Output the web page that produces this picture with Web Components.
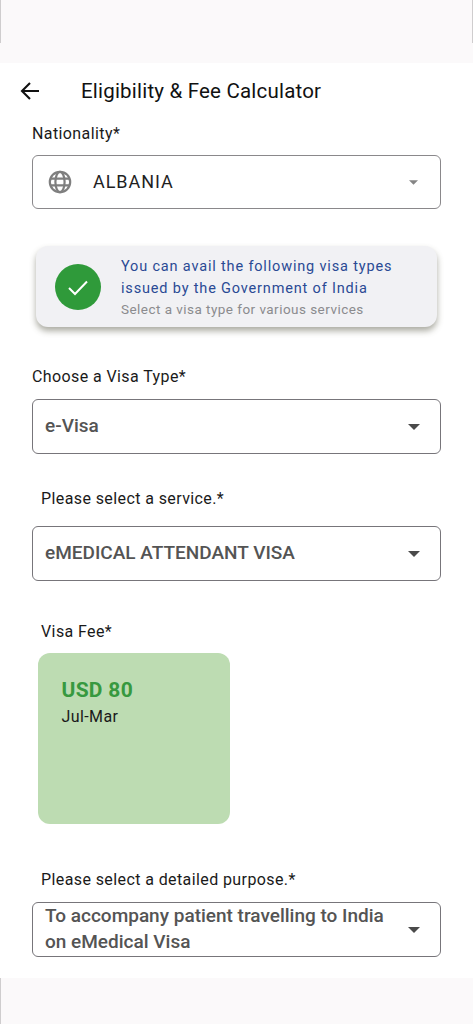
<!DOCTYPE html>
<html><head><meta charset="utf-8"><title>Eligibility & Fee Calculator</title>
<style>
html,body{margin:0;padding:0;background:#fff}
body{width:473px;height:1024px;overflow:hidden;font-family:Roboto,"Liberation Sans",sans-serif;display:flex;flex-direction:column}
</style></head><body>
<sys-bar kind="top"></sys-bar>
<app-header>Eligibility &amp; Fee Calculator</app-header>
<main-form>
  <field-label style="margin-top:0;height:22px">Nationality*</field-label>
  <select-box variant="plain" style="margin-top:10px;height:54px" icon>ALBANIA</select-box>
  <info-card style="margin-top:37px"></info-card>
  <field-label style="margin-top:39px">Choose a Visa Type*</field-label>
  <select-box style="margin-top:11px">e-Visa</select-box>
  <field-label indent style="margin-top:34px">Please select a service.*</field-label>
  <select-box style="margin-top:16px">eMEDICAL ATTENDANT VISA</select-box>
  <field-label indent style="margin-top:40px">Visa Fee*</field-label>
  <fee-card style="margin-top:10px" amount="USD 80" period="Jul-Mar"></fee-card>
  <field-label indent style="margin-top:45px">Please select a detailed purpose.*</field-label>
  <select-box multi style="margin-top:11px">To accompany patient travelling to India on eMedical Visa</select-box>
</main-form>
<sys-bar kind="bottom"></sys-bar>
<script>
function def(name, css, html, init){
  customElements.define(name, class extends HTMLElement{
    constructor(){super();const s=this.attachShadow({mode:'open'});s.innerHTML='<style>'+css+'</style>'+html;}
    connectedCallback(){ if(init) init(this, this.shadowRoot); }
  });
}
def('sys-bar',`
 :host{display:block;background:#fbf9fa;flex:none;box-sizing:border-box;position:relative}
 :host([kind=top]){height:63px}
 :host([kind=bottom]){height:46px}
 i{position:absolute;width:1px;background:#cfcdce;top:0}
 .l{left:0}.r{right:0}
 :host([kind=top]) i{height:43px}
 :host([kind=bottom]) i{height:46px}
 :host([kind=bottom]) .r{display:none}
`,`<i class="l"></i><i class="r"></i>`);
def('app-header',`
 :host{display:flex;align-items:center;height:56px;flex:none;color:#111}
 svg{margin-left:18px;width:24px;height:24px;flex:none}
 span{margin-left:39px;font-size:20.5px;line-height:56px;letter-spacing:.2px}
`,`<svg viewBox="0 0 24 24"><path d="M21 12H4.5M12 4l-8 8 8 8" fill="none" stroke="#111" stroke-width="2.1"/></svg><span><slot></slot></span>`);
def('main-form',`
 :host{display:flex;flex-direction:column;flex:1;min-height:0;padding:4px 32px 0;box-sizing:border-box;overflow:hidden}
`,`<slot></slot>`);
def('field-label',`
 :host{display:block;font-size:16px;line-height:22px;color:#1a1a1a;letter-spacing:.4px;flex:none}
 :host([indent]){padding-left:9px}
`,`<slot></slot>`);
def('select-box',`
 :host{display:flex;align-items:center;height:55px;box-sizing:border-box;border:1px solid #77757a;border-radius:6px;padding:0 20px 2px 12px;flex:none;color:#545454;font-size:19px;font-weight:500;background:#fff}
 :host([icon]){font-size:18px;font-weight:400;color:#1f1f1f;padding:0 20px 2px 15px;letter-spacing:.95px;border-color:#8a888b}
 :host([multi]){line-height:26px}
 .t{flex:1;min-width:0}
 :host([multi]) .t{padding-right:18px}
 .g{display:none;width:24px;height:24px;margin-right:21px;flex:none;margin-top:2px}
 :host([icon]) .g{display:block}
 .a{flex:none;width:12px;height:6px;margin-top:3px}
 :host([icon]) .a{width:9px;height:5px;margin-right:2px;margin-top:2px}
`,`<svg class="g" viewBox="0 0 24 24" fill="none" stroke="#7f7f7f" stroke-width="2.2"><circle cx="12" cy="12" r="10.2"/><ellipse cx="12" cy="12" rx="4.6" ry="10.2"/><path d="M2.4 8.6h19.2M2.4 15.4h19.2"/></svg><span class="t"><slot></slot></span><svg class="a" viewBox="0 0 12 6"><path d="M0 0h12L6 6z" fill="#4a4a4a"/></svg>`,
 (h,s)=>{ if(h.hasAttribute('icon')) s.querySelector('.a path').setAttribute('fill','#858585'); });
def('info-card',`
 :host{display:flex;align-items:center;height:81px;margin-left:4px;margin-right:4px;border-radius:12px;background:#f1f1f4;box-shadow:0 4px 6px rgba(70,70,50,.45);flex:none;box-sizing:border-box;padding-left:19px}
 .c{width:46px;height:46px;border-radius:50%;background:#2f9a3a;flex:none;display:flex;align-items:center;justify-content:center}
 .c svg{width:24px;height:24px}
 .x{margin-left:20px}
 .m{font-size:14.5px;line-height:22px;color:#2a4a94;letter-spacing:.83px}
 .s{font-size:13.5px;line-height:18px;color:#8b8b8e;letter-spacing:.46px}
`,`<div class="c"><svg viewBox="0 0 24 24"><path d="M3 13l6 6L21 6.5" fill="none" stroke="#fff" stroke-width="2"/></svg></div>
<div class="x"><div class="m">You can avail the following visa types<br>issued by the Government of India</div><div class="s">Select a visa type for various services</div></div>`);
def('fee-card',`
 :host{display:block;width:192px;height:171px;margin-left:6px;border-radius:12px;background:#bddcb2;box-sizing:border-box;padding:25px 0 0 23.5px;flex:none}
 .a{font-size:21px;font-weight:700;line-height:24px;color:#37993f;letter-spacing:.3px}
 .p{font-size:16px;line-height:22px;color:#1a1a1a;margin-top:4px;letter-spacing:.4px}
`,`<div class="a"></div><div class="p"></div>`,
 (h,s)=>{s.querySelector('.a').textContent=h.getAttribute('amount');s.querySelector('.p').textContent=h.getAttribute('period');});
</script>
</body></html>
